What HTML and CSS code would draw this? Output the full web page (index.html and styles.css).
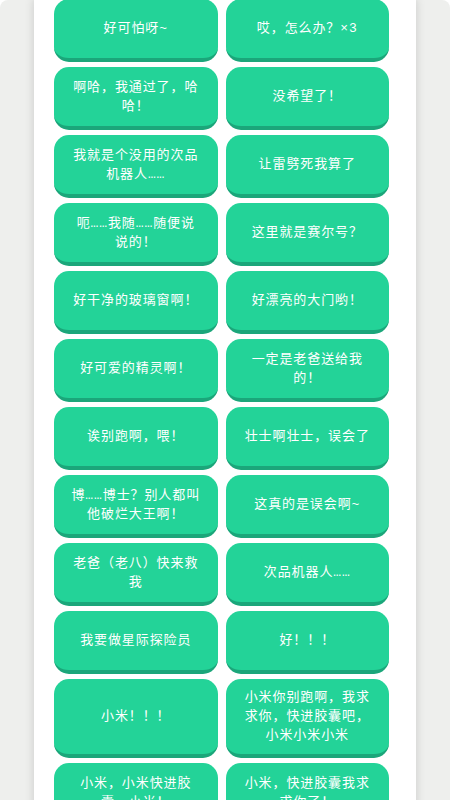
FILE: index.html
```html
<!DOCTYPE html>
<html>
<head>
  <meta charset="UTF-8">
  <title>台词</title>
  <link rel="stylesheet" href="styles.css">
</head>
<body>
  <div class="frame">
    <div class="panel">
      <div class="lines">
        <button class="line">好可怕呀~</button>
        <button class="line">哎，怎么办？×3</button>
        <button class="line">啊哈，我通过了，哈哈！</button>
        <button class="line">没希望了！</button>
        <button class="line">我就是个没用的次品机器人……</button>
        <button class="line">让雷劈死我算了</button>
        <button class="line">呃……我随……随便说说的！</button>
        <button class="line">这里就是赛尔号？</button>
        <button class="line">好干净的玻璃窗啊！</button>
        <button class="line">好漂亮的大门哟！</button>
        <button class="line">好可爱的精灵啊！</button>
        <button class="line">一定是老爸送给我的！</button>
        <button class="line">诶别跑啊，喂！</button>
        <button class="line">壮士啊壮士，误会了</button>
        <button class="line">博……博士？别人都叫他破烂大王啊！</button>
        <button class="line">这真的是误会啊~</button>
        <button class="line">老爸（老八）快来救我</button>
        <button class="line">次品机器人……</button>
        <button class="line">我要做星际探险员</button>
        <button class="line">好！！！</button>
        <button class="line">小米！！！</button>
        <button class="line">小米你别跑啊，我求求你，快进胶囊吧，小米小米小米</button>
        <button class="line">小米，小米快进胶囊，小米！</button>
        <button class="line">小米，快进胶囊我求求你了！</button>
      </div>
    </div>
  </div>
</body>
</html>
```

FILE: styles.css
```css
body { margin: 0; background: #fff; font-family: "Liberation Mono", "Noto Sans CJK SC", monospace; }
.frame { background: #eeefed; border-radius: 8px; min-height: 800px; overflow: hidden; }
.panel { width: 382px; margin: 0 auto 0 34px; background: #fff; min-height: 800px; box-shadow: 0 0 9px rgba(0, 0, 0, 0.16); padding: 0 27px 0 20px; box-sizing: border-box; }
.lines { display: grid; grid-template-columns: 1fr 1fr; gap: 5px 8px; margin-top: -1px; }
.line { min-height: 63px; box-sizing: border-box; padding: 9px 17px; border: 0; border-bottom: 4px solid #1ba67a; border-radius: 15px; background: #23d398; color: #fff; font-family: inherit; font-size: 13px; line-height: 19px; letter-spacing: 0.9px; text-align: center; cursor: pointer; }
```
